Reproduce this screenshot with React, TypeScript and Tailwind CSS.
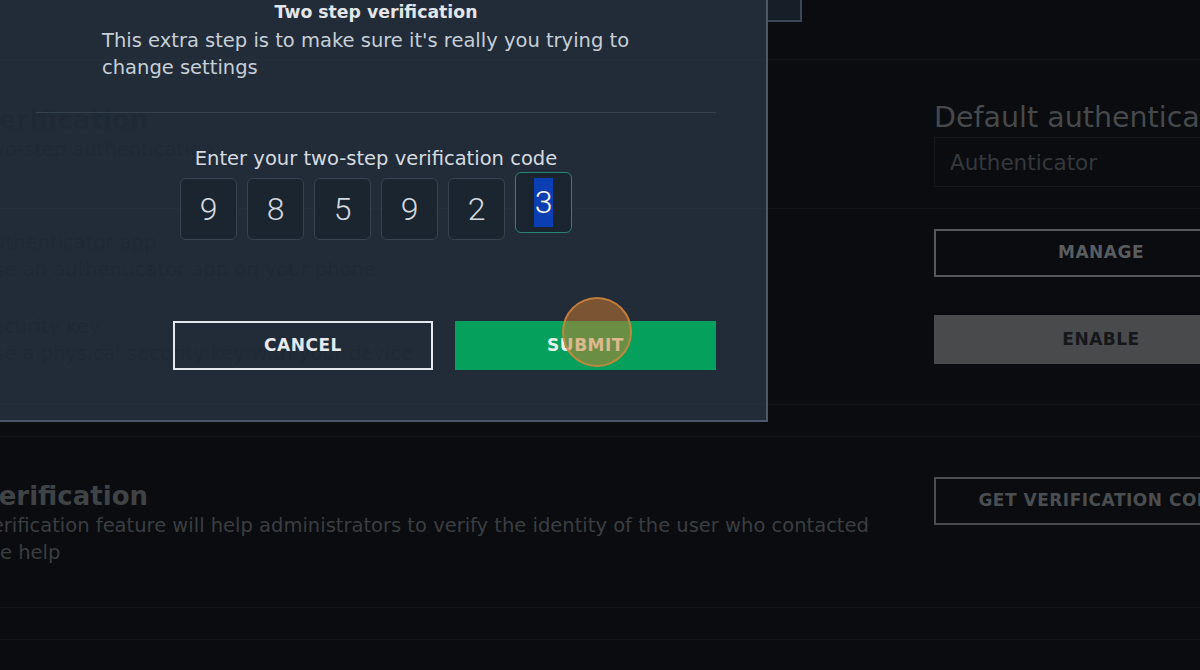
import React from "react";

const digits = ["9", "8", "5", "9", "2"];

function Page() {
  return (
    <div className="flex flex-col">
      <header className="h-[60px] border-b border-[#111418] flex">
        <div className="ml-[768px] w-[34px] h-[22px] bg-[#171e28] border-2 border-t-0 border-l-0 border-[#3d4654]" />
      </header>

      <section className="-ml-[20px] flex border-b border-[#111418]">
        <div className="w-[954px] shrink-0 pt-[44px]">
          <div className="text-[26px] leading-[32px] font-bold text-black">Verification</div>
          <div className="text-[19.5px] leading-[27px] text-black">Two-step authentication</div>
        </div>
        <div className="w-[334px] shrink-0 pt-[42px] pb-[21px]">
          <div className="text-[28.5px] leading-[32px] text-[#46494c] whitespace-nowrap">Default authenticator</div>
          <div className="mt-[3px] h-[50px] border border-[#16191c] flex items-center pt-[3px] px-[15px] text-[21.5px] text-[#35383b]">
            Authenticator
          </div>
        </div>
      </section>

      <section className="-ml-[20px] flex border-b border-[#111418]">
        <div className="w-[954px] shrink-0 pt-[20px] flex flex-col gap-[30px]">
          <div>
            <div className="text-[19.5px] leading-[27px] text-black">Authenticator app</div>
            <div className="text-[19.5px] leading-[27px] text-black">Use an authenticator app on your phone.</div>
          </div>
          <div>
            <div className="text-[19.5px] leading-[27px] text-black">Security key</div>
            <div className="text-[19.5px] leading-[27px] text-black">Use a physical security key with your device</div>
          </div>
        </div>
        <div className="w-[334px] shrink-0 pt-[20px] pb-[40px] flex flex-col">
          <button className="h-[48px] border-2 border-[#56595c] flex items-center justify-center text-[17px] font-bold text-[#5a5d60] tracking-[0.5px]">
            MANAGE
          </button>
          <button className="mt-[38px] h-[49px] bg-[#484a4b] flex items-center justify-center text-[17px] font-bold text-[#15171a] tracking-[0.5px]">
            ENABLE
          </button>
        </div>
      </section>

      <div className="h-[32px] border-b border-[#111418]" />

      <section className="-ml-[20px] h-[171px] flex border-b border-[#111418]">
        <div className="w-[954px] shrink-0 pt-[43px]">
          <div className="text-[26px] leading-[32px] font-bold text-[#404346]">Verification</div>
          <div className="w-[900px] text-[19.5px] leading-[27px] text-[#3b3e41]">
            Verification feature will help administrators to verify the identity of the user who contacted the help
          </div>
        </div>
        <div className="w-[334px] shrink-0 pt-[40px]">
          <button className="w-full h-[48px] border-2 border-[#4b4e51] flex items-center justify-center text-[17px] font-bold text-[#4b4e51] whitespace-nowrap tracking-[0.5px]">
            GET VERIFICATION CODE
          </button>
        </div>
      </section>

      <div className="h-[32px] border-b border-[#111418]" />
    </div>
  );
}

function CodeBox({ value }: { value: string }) {
  return (
    <div className="w-[57px] h-[62px] rounded-[6px] bg-[#1b2530] border border-[#37434f] flex items-center justify-center font-['Roboto',sans-serif] font-light text-[32px] text-[#d3d9df]">
      {value}
    </div>
  );
}

function Modal() {
  return (
    <div className="absolute left-0 top-0 w-[768px] h-[422px] bg-[#2c3b4c]/70 border-r-2 border-b-2 border-[#4b5666] pl-[36px] pr-[50px] flex flex-col">
      <h2 className="text-center text-[17.3px] leading-[24px] font-bold text-[#e2e6ea]">Two step verification</h2>
      <p className="mx-[66px] mt-[3px] text-[19.5px] leading-[27px] text-[#c7cfd7]">
        This extra step is to make sure it's really you trying to change settings
      </p>
      <div className="mt-[31px] h-px bg-[#34414e]" />
      <div className="mt-[32px] text-center text-[19.5px] leading-[27px] text-[#d6dbe0]">
        Enter your two-step verification code
      </div>
      <div className="mt-[6px] flex justify-center gap-[10px]">
        {digits.map((d, i) => (
          <CodeBox key={i} value={d} />
        ))}
        <div className="w-[57px] h-[61px] -translate-y-[6px] rounded-[6px] bg-[#1b2530] border-[1.5px] border-[#2a8573] flex items-center justify-center font-['Roboto',sans-serif] font-light text-[32px] text-white">
          <span className="inline-block bg-[#0b3db3] leading-[49px] px-[1px]">3</span>
        </div>
      </div>
      <div className="mt-[81px] flex justify-end gap-[22px]">
        <button className="w-[260px] h-[49px] border-2 border-[#e4e8ec] flex items-center justify-center text-[17px] font-bold text-[#e6eaee] tracking-[0.5px]">
          CANCEL
        </button>
        <button className="w-[261px] h-[49px] bg-[#05a15c] flex items-center justify-center text-[17px] font-bold text-[#e9f5ee] tracking-[0.5px]">
          SUBMIT
        </button>
      </div>
    </div>
  );
}

export default function App() {
  return (
    <div className="relative w-[1200px] h-[670px] overflow-hidden bg-[#0a0c0f] font-['DejaVu_Sans',sans-serif]">
      <Page />
      <Modal />
      <div className="absolute left-[562px] top-[297px] w-[70px] h-[70px] rounded-full bg-[#d27c2d]/50 border-2 border-[#d4883c]/80" />
    </div>
  );
}
